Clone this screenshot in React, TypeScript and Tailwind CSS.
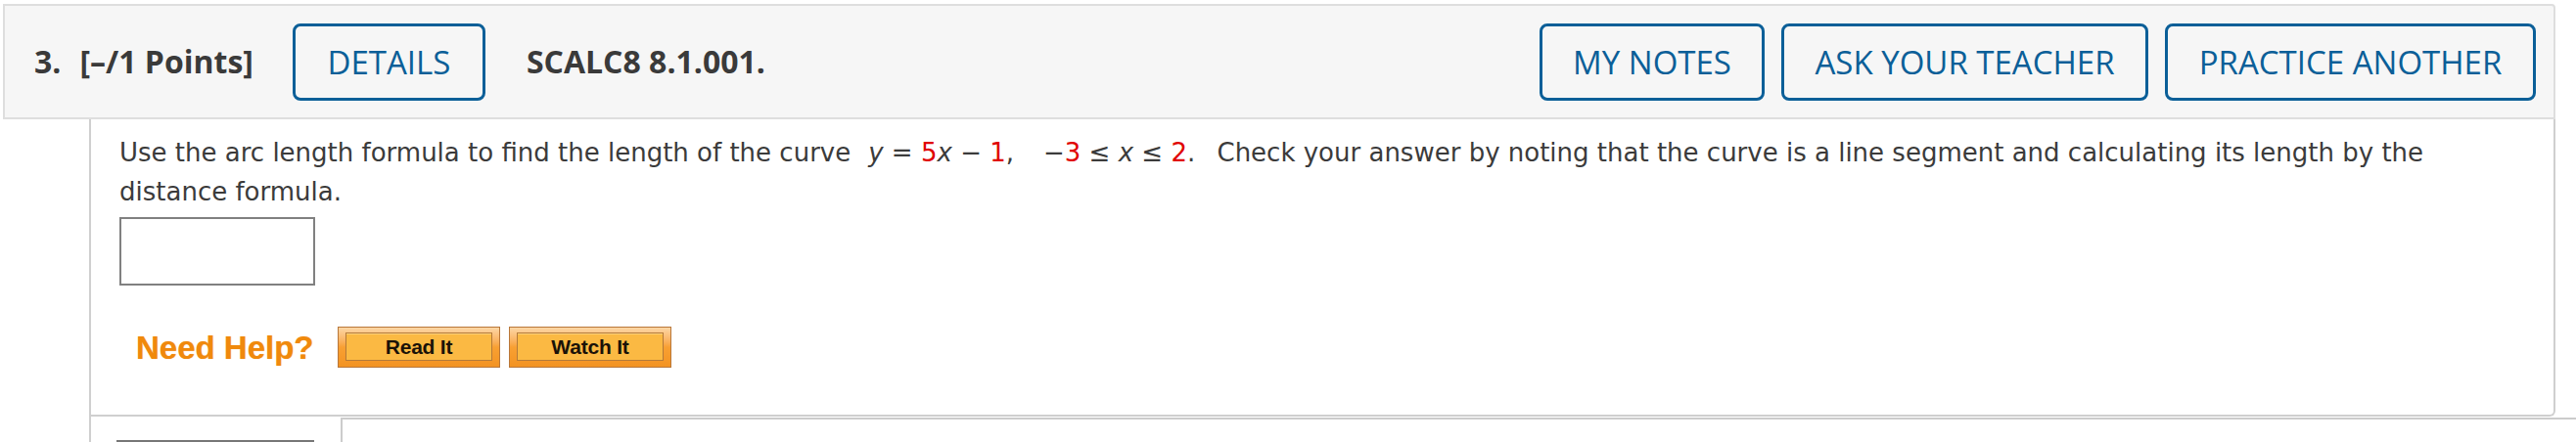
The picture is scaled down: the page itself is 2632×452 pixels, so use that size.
import React from "react";

function OrangeButton({ label }: { label: string }) {
  return (
    <div className="w-[166px] h-[42px] border border-[#b8773a] bg-gradient-to-b from-[#fcd6a4] via-[#f8a032] to-[#f39322] p-[5px_7px_6px_7px] flex">
      <div className="flex-1 border border-[#b47a3a] bg-[#fbb943] flex items-center justify-center shadow-[inset_0_1px_0_#fdd27d]">
        <span className="font-['Liberation_Sans',Arial,sans-serif] font-bold text-[21px] leading-none text-[#1a1208] tracking-[-0.2px]">
          {label}
        </span>
      </div>
    </div>
  );
}

function BlueButton({ label, w }: { label: string; w: string }) {
  return (
    <div
      className={`${w} h-[79px] border-[3px] border-[#0b5f98] rounded-[8px] flex items-center justify-center text-[#0b5f98] font-['Open_Sans',sans-serif] text-[33px] leading-none`}
    >
      {label}
    </div>
  );
}

const red = "text-[#e00000]";

export default function App() {
  return (
    <div className="w-[2632px] h-[452px] bg-white overflow-hidden">
      <div className="pt-[4px]">
        {/* Header */}
        <div className="ml-[3px] w-[2608px] h-[118px] bg-[#f6f6f6] border-2 border-[#dedede] rounded-tr-[4px] flex items-center justify-between pl-[30px] pr-[18px] font-['Open_Sans',sans-serif] text-[#3a3a3a]">
          <div className="flex items-center">
            <span className="font-bold text-[32px] leading-none">3.</span>
            <span className="font-bold text-[32px] leading-none ml-[19px]">[–/1 Points]</span>
            <div className="ml-[40px]">
              <BlueButton label="DETAILS" w="w-[197px]" />
            </div>
            <span className="font-bold text-[32px] leading-none ml-[42px]">SCALC8 8.1.001.</span>
          </div>
          <div className="flex items-center gap-[17px]">
            <BlueButton label="MY NOTES" w="w-[230px]" />
            <BlueButton label="ASK YOUR TEACHER" w="w-[375px]" />
            <BlueButton label="PRACTICE ANOTHER" w="w-[379px]" />
          </div>
        </div>

        {/* Question panel */}
        <div className="ml-[91px] w-[2520px] border-l-2 border-r-2 border-b-2 border-[#cfcfcf] rounded-br-[6px] pl-[29px] pr-[40px] pt-[14px] pb-[48px]">
          <p className="font-['DejaVu_Sans',Verdana,sans-serif] text-[26px] leading-[40px] text-[#3b3b3b]">
            Use the arc length formula to find the length of the curve
            <span className="whitespace-nowrap ml-[18px] mr-[14px]">
              <i>y</i> = <span className={red}>5</span>
              <i>x</i> − <span className={red}>1</span>,
              <span className="ml-[30px]">−</span>
              <span className={red}>3</span> ≤ <i>x</i> ≤ <span className={red}>2</span>.
            </span>{" "}
            Check your answer by noting that the curve is a line segment and calculating its length by the distance formula.
          </p>
          <div className="mt-[6px] w-[200px] h-[70px] border-2 border-[#808080] bg-white" />
          <div className="mt-[42px] ml-[17px] flex items-center">
            <span className="font-['Liberation_Sans',Arial,sans-serif] font-bold text-[33px] leading-none text-[#f0890c] [text-shadow:0_0_1px_#f6b060] w-[206px]">
              Need Help?
            </span>
            <div className="flex gap-[9px]">
              <OrangeButton label="Read It" />
              <OrangeButton label="Watch It" />
            </div>
          </div>
        </div>

        {/* Continuation below */}
        <div className="ml-[91px] h-[40px] border-l-2 border-[#cfcfcf] flex">
          <div className="ml-[26px] mt-[24px] w-[202px] border-t-2 border-[#777777]" />
          <div className="ml-[27px] mt-[1px] flex-1 border-t-2 border-l-2 border-[#cccccc]" />
        </div>
      </div>
    </div>
  );
}
